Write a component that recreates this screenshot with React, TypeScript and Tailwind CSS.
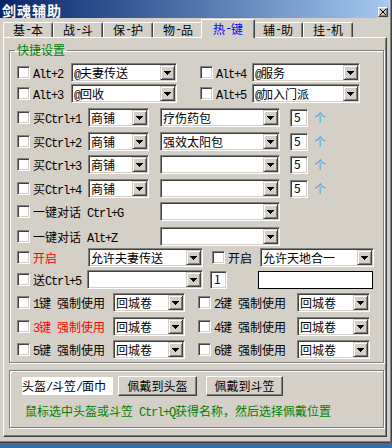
import type { ReactNode } from "react";

// classic win32 bevels
const sunken =
  "border border-t-[#808080] border-l-[#808080] border-r-white border-b-white shadow-[inset_1px_1px_#404040,inset_-1px_-1px_#d4d0c8]";
const raised =
  "border border-t-white border-l-white border-r-[#404040] border-b-[#404040] shadow-[inset_-1px_-1px_#808080]";
const etched = "border border-[#808080] shadow-[inset_1px_1px_white,1px_1px_white]";

// half-width latin like SimSun
const L = ({ children }: { children: ReactNode }) => (
  <span className="font-['Liberation_Mono',monospace] text-[12px] leading-none tracking-[-1.2px]">
    {children}
  </span>
);

const DropBtn = () => (
  <span className="flex w-[15px] shrink-0 items-center justify-center bg-[#d4d0c8] border border-t-[#d4d0c8] border-l-[#d4d0c8] border-r-[#404040] border-b-[#404040] shadow-[inset_1px_1px_white,inset_-1px_-1px_#808080]">
    <svg width="7" height="4" viewBox="0 0 7 4" shapeRendering="crispEdges">
      <path d="M0 0h7L3.5 4z" fill="#000" />
    </svg>
  </span>
);

function Combo({ className, children }: { className: string; children?: ReactNode }) {
  return (
    <div className={`flex h-[19px] shrink-0 bg-white p-px ${sunken} ${className}`}>
      <span className="flex-1 whitespace-nowrap pl-[1px] leading-[15px]">{children}</span>
      <DropBtn />
    </div>
  );
}

function Field({ className, children }: { className: string; children?: ReactNode }) {
  return (
    <div
      className={`h-[18px] shrink-0 bg-white pl-[3px] leading-[14px] ${sunken} ${className}`}
    >
      {children}
    </div>
  );
}

function Check({
  className = "",
  red = false,
  children,
}: {
  className?: string;
  red?: boolean;
  children: ReactNode;
}) {
  return (
    <div className={`flex shrink-0 items-center ${className}`}>
      <span className={`h-[13px] w-[13px] shrink-0 bg-white ${sunken}`} />
      <span className={`ml-[3px] whitespace-nowrap ${red ? "text-[#ff0000]" : ""}`}>
        {children}
      </span>
    </div>
  );
}

const tabs = [
  ["基", "本"],
  ["战", "斗"],
  ["保", "护"],
  ["物", "品"],
  ["热", "键"],
  ["辅", "助"],
  ["挂", "机"],
];

const buyRows = [
  { k: "1", item: "疗伤药包", mt: "mt-[5px]" },
  { k: "2", item: "强效太阳包", mt: "mt-[5px]" },
  { k: "3", item: "", mt: "mt-[4px]" },
  { k: "4", item: "", mt: "mt-[5px]" },
];

const keyRows = [
  { a: "1", b: "2", mt: "mt-[4px]", red: false },
  { a: "3", b: "4", mt: "mt-[5px]", red: true },
  { a: "5", b: "6", mt: "mt-[4px]", red: false },
];

export default function App() {
  return (
    <div className="h-[448px] w-[392px] overflow-hidden bg-[#3a6ea5] font-['Noto_Sans_CJK_SC',sans-serif] text-[12px] text-black">
      <div className="flex h-[443px] flex-col bg-[#d4d0c8] pr-[3px] shadow-[inset_-1px_0_#404040,inset_-2px_0_#808080,inset_0_-1px_#404040,inset_0_-2px_#808080]">
        {/* title bar */}
        <div className="flex h-[18px] shrink-0 items-center justify-between bg-linear-to-r from-[#0a246a] to-[#a6caf0] pl-[2px] pr-[1px]">
          <span className="pt-px text-[14px] font-bold leading-[16px] tracking-[1px] text-white">
            剑魂辅助
          </span>
          <span
            className={`mb-[1px] flex h-[10px] w-[10px] items-center justify-center self-end bg-[#d4d0c8] ${raised}`}
          >
            <svg width="6" height="6" viewBox="0 0 6 6" shapeRendering="crispEdges">
              <path d="M0 0L6 6M6 0L0 6" stroke="#000" strokeWidth="1.3" />
            </svg>
          </span>
        </div>

        {/* tabs */}
        <div className="flex h-[19px] shrink-0 items-end pl-[3px]">
          {tabs.map(([a, b], i) =>
            i === 4 ? (
              <div
                key={a}
                className="relative z-10 -mx-[2px] -mb-px flex h-[19px] w-[54px] items-center justify-center rounded-t-[2px] border border-b-0 border-t-white border-l-white border-r-[#404040] bg-[#d4d0c8] text-[#0000ff] shadow-[inset_-1px_0_#808080]"
              >
                {a}
                <L>-</L>
                {b}
              </div>
            ) : (
              <div
                key={a}
                className="flex h-[15px] w-[50px] items-center justify-center rounded-t-[2px] border border-b-0 border-t-white border-l-white border-r-[#404040] shadow-[inset_-1px_0_#808080]"
              >
                {a}
                <L>-</L>
                {b}
              </div>
            )
          )}
        </div>

        {/* tab panel */}
        <div
          className={`ml-[3px] mr-[2px] flex h-[400px] shrink-0 flex-col border border-t-white border-l-white border-r-[#404040] border-b-[#404040] shadow-[inset_-1px_-1px_#808080]`}
        >
          <fieldset className={`ml-[5px] mt-[5px] w-[375px] pb-[3px] ${etched}`}>
            <legend className="ml-[5px] px-[2px] leading-[14px] text-[#008000]">快捷设置</legend>

            {/* Alt rows */}
            <div className="mt-[6px] flex h-[19px] items-center pl-[7px]">
              <Check className="w-[54px]">
                <L>Alt+2</L>
              </Check>
              <Combo className="w-[106px]">
                <L>@</L>夫妻传送
              </Combo>
              <Check className="ml-[23px] w-[52px]">
                <L>Alt+4</L>
              </Check>
              <Combo className="w-[108px]">
                <L>@</L>服务
              </Combo>
            </div>
            <div className="mt-[2px] flex h-[19px] items-center pl-[7px]">
              <Check className="w-[54px]">
                <L>Alt+3</L>
              </Check>
              <Combo className="w-[106px]">
                <L>@</L>回收
              </Combo>
              <Check className="ml-[23px] w-[52px]">
                <L>Alt+5</L>
              </Check>
              <Combo className="w-[108px]">
                <L>@</L>加入门派
              </Combo>
            </div>

            {/* buy rows */}
            {buyRows.map((r) => (
              <div key={r.k} className={`${r.mt} flex h-[19px] items-center pl-[7px]`}>
                <Check className="w-[71px]">
                  买<L>Ctrl+{r.k}</L>
                </Check>
                <Combo className="w-[61px]">商铺</Combo>
                <Combo className="ml-[11px] w-[120px]">{r.item}</Combo>
                <Field className="ml-[10px] w-[18px]">5</Field>
                <span className="ml-[6px] text-[#4f9fef]">个</span>
              </div>
            ))}

            {/* one key chat */}
            <div className="mt-[4px] flex h-[19px] items-center pl-[7px]">
              <Check className="w-[143px]">
                一键对话<L>{" Ctrl+G"}</L>
              </Check>
              <Combo className="w-[120px]" />
            </div>
            <div className="mt-[6px] flex h-[19px] items-center pl-[7px]">
              <Check className="w-[143px]">
                一键对话<L>{" Alt+Z"}</L>
              </Check>
              <Combo className="w-[120px]" />
            </div>

            {/* enable */}
            <div className="mt-[2px] flex h-[19px] items-center pl-[7px]">
              <Check className="w-[71px]" red>
                开启
              </Check>
              <Combo className="w-[115px]">允许夫妻传送</Combo>
              <Check className="ml-[9px] w-[48px]">开启</Check>
              <Combo className="w-[114px]">允许天地合一</Combo>
            </div>

            {/* send */}
            <div className="mt-[3px] flex h-[19px] items-center pl-[7px]">
              <Check className="w-[70px]">
                送<L>Ctrl+5</L>
              </Check>
              <Combo className="w-[116px]" />
              <Field className="ml-[7px] w-[17px]">1</Field>
              <div className="ml-[31px] h-[18px] w-[115px] shrink-0 border border-black bg-white" />
            </div>

            {/* force use */}
            {keyRows.map((r) => (
              <div key={r.a} className={`${r.mt} flex h-[19px] items-center pl-[7px]`}>
                <Check className="w-[96px]" red={r.red}>
                  <L>{r.a}</L>键<L> </L>强制使用
                </Check>
                <Combo className="w-[72px]">回城卷</Combo>
                <Check className="ml-[13px] w-[99px]">
                  <L>{r.b}</L>键<L> </L>强制使用
                </Check>
                <Combo className="w-[73px]">回城卷</Combo>
              </div>
            ))}
          </fieldset>

          <fieldset className={`ml-[5px] mt-[7px] h-[58px] w-[375px] ${etched}`}>
            <div className="mt-[5px] flex h-[20px] items-center pl-[12px]">
              <div className="h-[18px] w-[91px] shrink-0 whitespace-nowrap bg-white leading-[18px]">
                头盔<L>/</L>斗笠<L>/</L>面巾
              </div>
              <button
                className={`ml-[5px] h-[20px] w-[79px] shrink-0 bg-[#d4d0c8] leading-[16px] ${raised}`}
              >
                佩戴到头盔
              </button>
              <button
                className={`ml-[9px] h-[20px] w-[77px] shrink-0 bg-[#d4d0c8] leading-[16px] ${raised}`}
              >
                佩戴到斗笠
              </button>
            </div>
            <p className="ml-[15px] mt-[8px] whitespace-nowrap leading-[14px] text-[#008000]">
              鼠标选中头盔或斗笠<L>{" Ctrl+Q"}</L>获得名称，然后选择佩戴位置
            </p>
          </fieldset>
        </div>
      </div>
    </div>
  );
}
